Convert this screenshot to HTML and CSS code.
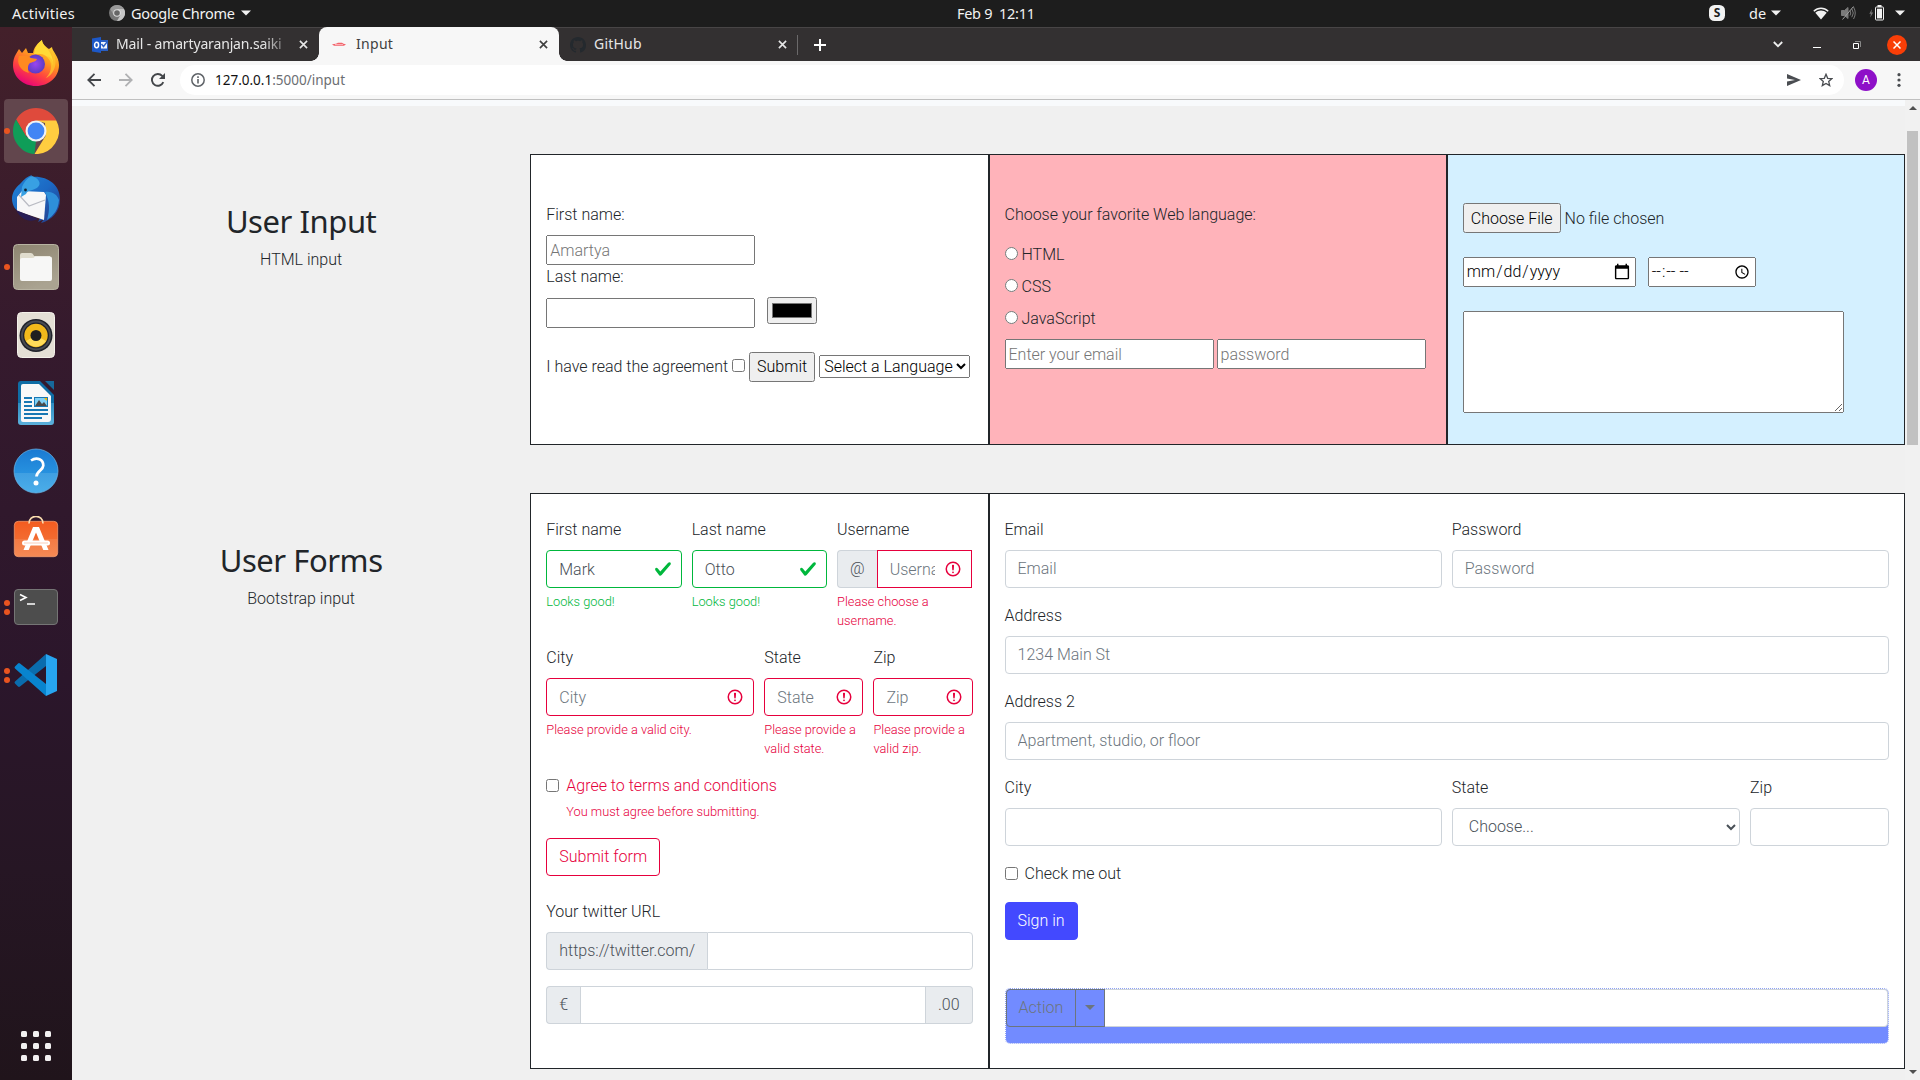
FILE: index.html
```html
<!DOCTYPE html>
<html lang="en">
<head>
<meta charset="utf-8">
<title>Input</title>
<link rel="stylesheet" href="styles.css">
</head>
<body>
<svg class="defs" aria-hidden="true">
  <symbol id="check" viewBox="0 0 8 8"><path fill="#00b73c" d="M2.3 6.73L.6 4.53c-.4-1.04.46-1.4 1.1-.8l1.1 1.4 3.4-3.8c.6-.63 1.6-.27 1.2.7l-4 4.6c-.43.5-.8.4-1.1.1z"/></symbol>
  <symbol id="alert" viewBox="0 0 12 12"><circle cx="6" cy="6" r="4.5" fill="none" stroke="#e6003d"/><path d="M5.8 3.6h.4L6 6.5z" fill="#e6003d" stroke="#e6003d" stroke-linejoin="round"/><circle cx="6" cy="8.2" r=".6" fill="#e6003d"/></symbol>
  <symbol id="cross" viewBox="0 0 10 10"><path d="M1 1l8 8M9 1L1 9" stroke="currentColor" stroke-width="1.8" fill="none"/></symbol>
  <symbol id="caret" viewBox="0 0 10 6"><path d="M0 .5h10L5 5.5z" fill="#f2f2f2"/></symbol>
</svg>

<header class="topbar">
  <div class="top-left">
    <span class="activities">Activities</span>
    <svg class="app-ico" viewBox="0 0 16 16"><circle cx="8" cy="8" r="8" fill="#777"/><path d="M8 4h7a8 8 0 0 1-7 12l3.4-6z" fill="#c4c4c4"/><path d="M1.2 4A8 8 0 0 1 15 4H8L4.6 10z" fill="#9a9a9a"/><circle cx="8" cy="8" r="3.8" fill="#ddd"/><circle cx="8" cy="8" r="2.8" fill="#666"/></svg>
    <span class="app-name">Google Chrome</span>
    <svg class="caret" viewBox="0 0 10 6"><use href="#caret"/></svg>
  </div>
  <div class="clock">Feb 9&nbsp; 12:11</div>
  <div class="top-right">
    <svg width="16" height="16" viewBox="0 0 16 16"><rect width="16" height="16" rx="5.5" fill="#f2f2f2"/><text x="8" y="12.3" text-anchor="middle" class="skype-s">S</text></svg>
    <span class="lang">de</span>
    <svg class="caret lang-caret" viewBox="0 0 10 6"><use href="#caret"/></svg>
    <svg class="wifi" width="16" height="13" viewBox="0 0 16 13"><path d="M.8 4.3C5 .2 11 .2 15.200 4.300" fill="none" stroke="#f2f2f2" stroke-width="1.500"/><path d="M2.300 5.700c3.300-3 8.100-3 11.400 0L8 12.600z" fill="#f2f2f2"/></svg>
    <svg class="mute" width="15" height="14" viewBox="0 0 15 14" fill="none" stroke="#7b7b7b"><path d="M.5 4.500h3L7 1.500v11L3.500 9.500h-3z" fill="#7b7b7b"/><path d="M9 4.500q1.500 2.500 0 5M10.800 2.800q3 4.200 0 8.400M12.500 1q3.500 6 0 12"/><path d="M1.500 13.500L12.500.5" stroke="#a0a0a0"/></svg>
    <svg class="batt" width="15" height="16" viewBox="0 0 15 16"><path d="M3 4L.3 8.700h1.600L1.200 12.500 4.200 7.400H2.400z" fill="#777"/><rect x="6.500" y="2" width="8" height="13" rx=".8" fill="none" stroke="#f2f2f2"/><rect x="8" y="3.700" width="5" height="9.700" fill="#f2f2f2"/><rect x="8.500" y="0" width="4" height="2" fill="#f2f2f2"/></svg>
    <svg class="caret" viewBox="0 0 10 6"><use href="#caret"/></svg>
  </div>
</header>

<div class="desktop">
<nav class="dock">
  <div class="slot"><svg width="46" height="46" viewBox="0 0 46 46">
    <defs><linearGradient id="fx" x1=".8" y1="0" x2=".3" y2="1"><stop offset="0" stop-color="#ffe83a"/><stop offset=".4" stop-color="#ff9a1f"/><stop offset=".7" stop-color="#ff4340"/><stop offset="1" stop-color="#e5007a"/></linearGradient>
    <radialGradient id="fxp"><stop offset="0" stop-color="#9a45f0"/><stop offset="1" stop-color="#5b3cc4"/></radialGradient></defs>
    <path d="M3 14l3-5 3 4 4-5 2 5h5C21 7 25 3 29 0c0 4 4 7 7 9l3-2c0 4 7 9 7 18 0 12-10 21-23 21S0 37 0 25c0-4 1-8 3-11z" fill="url(#fx)"/>
    <path d="M29 0c0 4 4 7 7 11 3 5 5 9 4 15-2-5-6-12-13-12h-6C22 7 25 3 29 0z" fill="#ffda36"/>
    <circle cx="22.500" cy="24" r="9.500" fill="url(#fxp)"/>
    <path d="M6 16c4-1 9-1 12 2l6 1c-1 3-5 3-7 4-3 2-2 8-1 10-8-2-13-9-10-17z" fill="#ff8a20"/>
    <path d="M39 11c7 10 3 23-6 27 7-7 6-16 1-22 3 1 5 3 6 6z" fill="#ffc42d" opacity=".8"/></svg></div>
  <div class="slot active"><i class="dots"><b></b></i><svg width="46" height="46" viewBox="0 0 46 46">
    <path d="M3.100 11.500A23 23 0 0 1 42.900 11.500 L43 13H23L13 28.500z" fill="#df4a3c"/>
    <path d="M3.100 11.500L13.500 29 23 33l-1.500 13A23 23 0 0 1 3.100 11.500z" fill="#0f9d58"/>
    <path d="M43.300 12.500A23 23 0 0 1 21.500 46L32.500 28 32 15l-9-2.500z" fill="#ffcd40"/>
    <circle cx="23" cy="23" r="10.500" fill="#f3f3f3"/><circle cx="23" cy="23" r="8.400" fill="#4285f4"/></svg></div>
  <div class="slot"><svg width="48" height="48" viewBox="0 0 48 48">
    <defs><linearGradient id="tb" x1="0" y1="0" x2="1" y2="1"><stop offset="0" stop-color="#2185d8"/><stop offset=".5" stop-color="#1c69c4"/><stop offset="1" stop-color="#28357f"/></linearGradient></defs>
    <path d="M8 9C12 4 16 1 20 0l-1 2C34 0 48 9 48 24c0 13-8 21-19 24l3-4-6 3 3-6L6 36C2 34 0 28 0 24c0-6 3-11 8-15z" fill="url(#tb)"/>
    <path d="M5 22l5-6 22 1 2 3-2 25L5 36z" fill="#f7f7f8"/><path d="M7 20l10 11 16-6" fill="none" stroke="#b9bbc3" stroke-width="1.200"/>
    <path d="M10 12C13 5 17 2 20 1c6 2 10 7 6 11-4 4-10 2-12 7l-5 3z" fill="#38a0e3"/><circle cx="13.500" cy="15" r="1.400" fill="#123"/>
    <path d="M4 35l22 9c-8 4-17 1-22-9z" fill="#271d56"/><path d="M33 17c8-1 12 3 14 8-1 10-5 15-12 20 3-10 3-18-2-28z" fill="#2e8fd9"/></svg></div>
  <div class="slot"><i class="dots"><b></b></i><svg width="46" height="46" viewBox="0 0 46 46">
    <defs><linearGradient id="fm" x1="0" y1="0" x2=".4" y2="1"><stop offset="0" stop-color="#8d8470"/><stop offset="1" stop-color="#aaa391"/></linearGradient></defs>
    <rect x=".5" y=".5" width="45" height="45" rx="4" fill="url(#fm)" stroke="#b8b3a2"/>
    <path d="M7 11q0-2 2-2h9q2 0 3 3h16v12H7z" fill="#e0dccd"/><path d="M7 16q0-2 2-2h10q2 0 3-1.500h15q2 0 2 2V35q0 2-2 2H9q-2 0-2-2z" fill="#f7f7f6"/></svg></div>
  <div class="slot"><svg width="38" height="46" viewBox="0 0 38 46">
    <rect x=".5" y=".5" width="37" height="45" rx="4" fill="#e4dfd5" stroke="#f4f1ea"/><circle cx="19" cy="23.500" r="16.500" fill="#20222a"/><circle cx="19" cy="23.500" r="14" fill="none" stroke="#484b52" stroke-width="2"/><circle cx="19" cy="23.500" r="11.700" fill="#f1b91b"/><path d="M9 29a11.700 11.700 0 0 0 20 0L19 23.500z" fill="#ffdc5a"/><circle cx="19" cy="23.500" r="5.500" fill="#202020"/></svg></div>
  <div class="slot"><svg width="38" height="46" viewBox="0 0 38 46">
    <defs><linearGradient id="wr" x2="0" y2="1"><stop offset=".5" stop-color="#0f6da5"/><stop offset=".5" stop-color="#2e8dc1"/><stop offset="1" stop-color="#5cb1dc"/></linearGradient></defs>
    <path d="M4 1h19l14 14v27q0 3-3 3H4q-3 0-3-3V4q0-3 3-3z" fill="url(#wr)"/><path d="M28 1h9v9z" fill="#17699c"/><path d="M6 4h16l12 12v23q0 3-3 3H6q-2 0-2-2V6q0-2 2-2z" fill="#f8f8f8"/>
    <path d="M7 18h8M7 22h8M7 26h8M7 30h24M7 34h24M7 38h18" stroke="#1878b4" stroke-width="2"/><rect x="17" y="17" width="14" height="10" fill="#1878b4"/><path d="M18 18h12v8H18z" fill="#7fd0f5"/><path d="M18 26l4-6 3 4 2-2 3 4z" fill="#4a4a4a"/><path d="M27 18h3v3z" fill="#f5b800"/></svg></div>
  <div class="slot"><svg width="46" height="46" viewBox="0 0 46 46">
    <defs><linearGradient id="hp" x2="0" y2="1"><stop offset="0" stop-color="#1a7ad3"/><stop offset=".54" stop-color="#2791df"/><stop offset=".54" stop-color="#3f9fe2"/><stop offset="1" stop-color="#4baee9"/></linearGradient></defs>
    <circle cx="23" cy="23" r="22" fill="url(#hp)" stroke="#6bb7ea" stroke-width=".7"/><path d="M18 12.500c6-4 12.500-1 12.300 5.200C30 22.500 23.500 23 23.500 28.500" fill="none" stroke="#fff" stroke-width="2.700"/><circle cx="23" cy="35" r="2.500" fill="#fff"/></svg></div>
  <div class="slot"><svg width="46" height="46" viewBox="0 0 46 46">
    <defs><linearGradient id="sw" x2="0" y2="1"><stop offset="0" stop-color="#f35c20"/><stop offset=".5" stop-color="#f36b30"/><stop offset=".5" stop-color="#f47a43"/><stop offset="1" stop-color="#f58a55"/></linearGradient></defs>
    <rect x="1.300" y="5.300" width="43.400" height="35.400" rx="4" fill="url(#sw)" stroke="#f9a274" stroke-width=".7"/><path d="M16 7.500C16-2 30-2 30 7.500" fill="none" stroke="#f9dcae" stroke-width="1.700"/><path d="M20 11h6l9.500 23h-5.200L23 16.500 15.700 34h-5.200z" fill="#fff"/><rect x="9" y="24.500" width="28" height="5" rx="2.500" fill="#fff"/><path d="M11 27h24" stroke="#f9cdb9"/></svg></div>
  <div class="slot"><i class="dots"><b></b><b></b></i><svg width="46" height="38" viewBox="0 0 46 38"><rect x="1.500" y="1.500" width="43" height="35" rx="3.500" fill="#4d4d4d" stroke="#757575"/><path d="M7 6.500l6 3-6 3" fill="none" stroke="#fff" stroke-width="1.600"/><path d="M14 16h8" stroke="#fff" stroke-width="1.500"/></svg></div>
  <div class="slot"><i class="dots"><b></b><b></b></i><svg width="44" height="44" viewBox="0 0 44 44"><path d="M32 1v12L6 33.500q-1 .8-2 0L1 30.500q-1-1 0-2z" fill="#0a6cad"/><path d="M32 43V31L6 10.500q-1-.8-2 0L1 13.500q-1 1 0 2z" fill="#0884cf"/><path d="M32 1l11 5v32l-11 5z" fill="#27a5f0"/></svg></div>
  <div class="apps"><i></i><i></i><i></i><i></i><i></i><i></i><i></i><i></i><i></i></div>
</nav>

<section class="browser">
  <div class="tabstrip">
    <div class="tab tab-mail">
      <svg width="16" height="16" viewBox="0 0 16 16"><path d="M8 3h8v11H8z" fill="#2a5fc4"/><path d="M9 5h6v6.500H9z" fill="#f2f6fc"/><path d="M9.500 7l2 2.500L15 5" fill="none" stroke="#2a5fc4" stroke-width="1.400"/><path d="M0 1.500L9 0v16L0 14.500z" fill="#1d58c8"/><ellipse cx="4.600" cy="8" rx="2" ry="2.700" fill="none" stroke="#fff" stroke-width="1.500"/></svg>
      <span class="tab-title fade">Mail - amartyaranjan.saiki</span>
      <svg class="x"><use href="#cross"/></svg>
    </div>
    <div class="tab tab-active">
      <svg width="16" height="16" viewBox="0 0 16 16"><path d="M1 8.300l4-.6 2-1h4l1.500 1 2.500.6L13 9.700H3z" fill="#f2636b"/><path d="M4 8.500h8" stroke="#ffc3c6" stroke-width=".8"/></svg>
      <span class="tab-title title-input">Input</span>
      <svg class="x"><use href="#cross"/></svg>
    </div>
    <div class="tab tab-git">
      <svg width="16" height="16" viewBox="0 0 16 16"><path fill="#24292e" d="M8 0C3.580 0 0 3.580 0 8c0 3.540 2.290 6.530 5.470 7.590.4.070.55-.17.55-.38 0-.19-.01-.82-.01-1.490-2.010.37-2.530-.49-2.690-.94-.09-.23-.48-.94-.82-1.130-.28-.15-.68-.52-.01-.53.63-.01 1.080.58 1.230.82.72 1.210 1.870.87 2.330.66.070-.52.280-.87.510-1.070-1.780-.2-3.640-.89-3.640-3.950 0-.87.310-1.590.820-2.150-.08-.2-.36-1.020.08-2.120 0 0 .67-.21 2.200.82.640-.18 1.320-.27 2-.27s1.360.09 2 .27c1.530-1.040 2.200-.82 2.200-.82.440 1.100.160 1.920.080 2.120.510.560.820 1.270.820 2.150 0 3.070-1.870 3.750-3.650 3.950.290.250.540.730.540 1.480 0 1.070-.01 1.930-.01 2.200 0 .21.150.46.550.38A8.010 8.010 0 0 0 16 8c0-4.420-3.580-8-8-8z"/></svg>
      <span class="tab-title title-git">GitHub</span>
      <svg class="x"><use href="#cross"/></svg>
    </div>
    <svg class="plus" width="12" height="12" viewBox="0 0 12 12"><path d="M6 0v12M0 6h12" stroke="#fff" stroke-width="2"/></svg>
    <div class="win">
      <svg width="10" height="7" viewBox="0 0 10 7"><path d="M.8 1L5 5.200 9.200 1" fill="none" stroke="#eee" stroke-width="1.800"/></svg>
      <svg class="min" width="8" height="7" viewBox="0 0 8 7"><path d="M0 6.500h8" stroke="#fff"/></svg>
      <svg class="restore" width="8" height="8" viewBox="0 0 8 8"><path d="M.5 2.500h5v5h-5z" fill="none" stroke="#fff"/><path d="M2 .5h5.500V6" fill="none" stroke="#888"/></svg>
      <span class="close"><svg width="8" height="8" viewBox="0 0 8 8"><path d="M.5.500l7 7M7.500.500l-7 7" stroke="#fff" stroke-width="1.500"/></svg></span>
    </div>
  </div>

  <div class="toolbar">
    <svg width="14" height="14" viewBox="0 0 14 14"><path d="M14 7H1.500M7.500.800L1.300 7l6.200 6.200" fill="none" stroke="#43464a" stroke-width="1.800"/></svg>
    <svg width="14" height="14" viewBox="0 0 14 14"><path d="M0 7h12.500M6.500.800L12.700 7l-6.200 6.200" fill="none" stroke="#b0b1b3" stroke-width="1.800"/></svg>
    <svg width="14" height="14" viewBox="0 0 14 14"><path d="M12.300 9.200A5.900 5.900 0 1 1 11.200 2.900L13 4.700" fill="none" stroke="#43464a" stroke-width="1.900"/><path d="M14 0v6H8z" fill="#43464a"/></svg>
    <div class="omnibox">
      <svg width="14" height="14" viewBox="0 0 14 14"><circle cx="7" cy="7" r="6.200" fill="none" stroke="#5f6368" stroke-width="1.500"/><path d="M7 6v4.500M7 3.300v1.600" stroke="#5f6368" stroke-width="1.600"/></svg>
      <span class="url"><b>127.0.0.1</b>:5000/input</span>
      <svg class="send" width="14" height="12" viewBox="0 0 14 12"><path d="M0 0l14 6L0 12V7.500L8 6 0 4.500z" fill="#4a4d51"/></svg>
      <svg width="14" height="14" viewBox="0 0 14 14"><path d="M7 1.300l1.700 4 4.200.3-3.200 2.800 1 4.200L7 10.400l-3.700 2.200 1-4.200L1.100 5.600l4.200-.3z" fill="none" stroke="#4a4d51" stroke-width="1.300"/></svg>
    </div>
    <span class="avatar">A</span>
    <svg width="4" height="14" viewBox="0 0 4 14" fill="#4a4d51"><circle cx="2" cy="1.700" r="1.600"/><circle cx="2" cy="7" r="1.600"/><circle cx="2" cy="12.300" r="1.600"/></svg>
  </div>

  <div class="viewport">
    <main class="page">
      <div class="navbar-edge"></div>

      <div class="row row-input">
        <div class="intro"><h2>User Input</h2><p>HTML input</p></div>
        <div class="card">
          <label>First name:</label>
          <input type="text" class="plain" placeholder="Amartya">
          <label class="tight">Last name:</label>
          <div class="line line-color"><input type="text" class="plain"><input type="color"></div>
          <div class="line line-agree"><span>I have read the agreement</span><input type="checkbox"><button type="button">Submit</button><select class="lang-select"><option>Select a Language</option></select></div>
        </div>
        <div class="card pink">
          <p class="question">Choose your favorite Web language:</p>
          <div class="radio"><input type="radio" name="l"><span>HTML</span></div>
          <div class="radio"><input type="radio" name="l"><span>CSS</span></div>
          <div class="radio"><input type="radio" name="l"><span>JavaScript</span></div>
          <div class="line line-login"><input type="text" class="plain" placeholder="Enter your email"><input type="password" class="plain" placeholder="password"></div>
        </div>
        <div class="card sky">
          <input type="file" class="file">
          <div class="line line-date"><input type="date"><input type="time"></div>
          <textarea></textarea>
        </div>
      </div>

      <div class="row row-forms">
        <div class="intro"><h2>User Forms</h2><p>Bootstrap input</p></div>
        <div class="card form">
          <div class="form-row thirds">
            <div><label>First name</label><div class="field"><input class="control valid" value="Mark"><svg class="mark"><use href="#check"/></svg></div><div class="feedback ok">Looks good!</div></div>
            <div><label>Last name</label><div class="field"><input class="control valid" value="Otto"><svg class="mark"><use href="#check"/></svg></div><div class="feedback ok">Looks good!</div></div>
            <div><label>Username</label><div class="group handle"><span class="addon">@</span><div class="field"><input class="control invalid square" placeholder="Username"><svg class="mark"><use href="#alert"/></svg></div></div><div class="feedback bad">Please choose a username.</div></div>
          </div>
          <div class="form-row halves">
            <div><label>City</label><div class="field"><input class="control invalid" placeholder="City"><svg class="mark"><use href="#alert"/></svg></div><div class="feedback bad">Please provide a valid city.</div></div>
            <div><label>State</label><div class="field"><input class="control invalid" placeholder="State"><svg class="mark"><use href="#alert"/></svg></div><div class="feedback bad">Please provide a valid state.</div></div>
            <div><label>Zip</label><div class="field"><input class="control invalid" placeholder="Zip"><svg class="mark"><use href="#alert"/></svg></div><div class="feedback bad">Please provide a valid zip.</div></div>
          </div>
          <div class="agree terms"><input type="checkbox"><div><div class="agree-text">Agree to terms and conditions</div><div class="feedback bad">You must agree before submitting.</div></div></div>
          <button type="button" class="btn btn-outline">Submit form</button>
          <label class="twitter">Your twitter URL</label>
          <div class="group"><span class="addon">https://twitter.com/</span><input class="control last"></div>
          <div class="group money"><span class="addon">€</span><input class="control mid"><span class="addon addon-end">.00</span></div>
        </div>
        <div class="card form wide">
          <div class="form-row pair">
            <div><label>Email</label><input class="control" placeholder="Email"></div>
            <div><label>Password</label><input class="control" placeholder="Password"></div>
          </div>
          <div class="form-row"><div><label>Address</label><input class="control" placeholder="1234 Main St"></div></div>
          <div class="form-row"><div><label>Address 2</label><input class="control" placeholder="Apartment, studio, or floor"></div></div>
          <div class="form-row place">
            <div><label>City</label><input class="control"></div>
            <div><label>State</label><select class="control"><option>Choose...</option></select></div>
            <div><label>Zip</label><input class="control"></div>
          </div>
          <div class="agree"><input type="checkbox"><div>Check me out</div></div>
          <button type="button" class="btn btn-primary">Sign in</button>
          <div class="action-box"><div class="group"><button type="button" class="btn act">Action</button><button type="button" class="btn toggle"><i></i></button><input class="control last"></div></div>
        </div>
      </div>
    </main>
    <div class="scrollbar"><i class="up"></i><div class="thumb"></div><i class="down"></i></div>
  </div>
</section>
</div>
</body>
</html>
```
FILE: styles.css
```css
* { box-sizing: border-box; }
body {
  margin: 0;
  width: 1920px;
  height: 1080px;
  overflow: hidden;
  font: 300 16px/24px Roboto, "Liberation Sans", sans-serif;
  color: #212529;
}
.defs { display: none; }
svg { display: block; flex: none; }
input, button, select, textarea { font: inherit; margin: 0; }

/* system bar */
.topbar {
  height: 27px;
  background: #1d1d1d;
  color: #f2f2f2;
  font: 400 14.5px/26px "Noto Sans", sans-serif;
  display: grid;
  grid-template-columns: 957px 1fr 211px;
}
.top-left, .top-right { display: flex; align-items: center; height: 26px; }
.top-left { padding-left: 12px; }
.activities { width: 97px; letter-spacing: .25px; }
.app-ico { width: 16px; height: 16px; margin-right: 6px; }
.app-name { width: 110px; letter-spacing: -.25px; }
.caret { width: 10px; height: 6px; }
.clock { letter-spacing: -.3px; }
.lang { margin-left: 24px; width: 22px; }
.wifi { margin-left: 32px; }
.mute { margin-left: 12px; }
.batt { margin-left: 13px; margin-right: 11px; }
.skype-s { font: 700 12px "Noto Sans", sans-serif; fill: #1d1d1d; }

.desktop { display: flex; height: 1053px; }

/* launcher */
.dock {
  width: 72px;
  flex: none;
  padding: 2px 4px 0;
  display: flex;
  flex-direction: column;
  align-items: center;
  background: linear-gradient(#43202a, #351a2d 30%, #2b162b 62%, #261624 80%, #20141b);
}
.slot {
  width: 64px;
  height: 64px;
  margin: 2px 0;
  border-radius: 4px;
  display: flex;
  align-items: center;
  justify-content: center;
  position: relative;
  flex: none;
}
.slot.active { background: #62464d; }
.dots {
  position: absolute;
  left: 0;
  top: 0;
  height: 64px;
  display: flex;
  flex-direction: column;
  justify-content: center;
  gap: 3px;
}
.dots b { width: 6px; height: 6px; border-radius: 50%; background: #e95420; }
.apps {
  display: grid;
  grid-template-columns: repeat(3, 6px);
  gap: 6px;
  margin: auto 0 19px;
}
.apps i { width: 6px; height: 6px; border-radius: 1.500px; background: #f2f0f1; }

/* browser chrome */
.browser { flex: 1; display: flex; flex-direction: column; min-width: 0; }
.tabstrip {
  height: 34px;
  background: #333031;
  border-top: 1px solid #484546;
  display: flex;
  align-items: center;
  color: #e6e6e6;
  font: 400 14px/20px "Noto Sans", sans-serif;
}
.tab { height: 33px; display: flex; align-items: center; }
.tab svg:first-child { margin-right: 8px; }
.tab-title { flex: 1; white-space: nowrap; overflow: hidden; margin-top: -1px; }
.x { width: 9px; height: 9px; }
.tab-mail { width: 247px; padding: 0 11px 0 20px; }
.fade {
  -webkit-mask: linear-gradient(90deg, #000 82%, transparent);
  mask: linear-gradient(90deg, #000 82%, transparent);
  letter-spacing: -.15px;
  margin-right: 4px;
}
.title-input { letter-spacing: .3px; margin-left: 1px; }
.title-git { letter-spacing: .2px; }
.tab-active {
  width: 240px;
  height: 34px;
  margin-top: -1px;
  padding: 0 11px 0 12px;
  background: #f7f7f7;
  color: #3f3f3f;
  border-radius: 8px 8px 0 0;
  position: relative;
}
.tab-active::before, .tab-active::after {
  content: "";
  position: absolute;
  bottom: 0;
  width: 8px;
  height: 8px;
}
.tab-active::before { left: -8px; background: radial-gradient(circle at 0 0, transparent 7.500px, #f7f7f7 8px); }
.tab-active::after { right: -8px; background: radial-gradient(circle at 100% 0, transparent 7.500px, #f7f7f7 8px); }
.tab-git { width: 239px; padding: 0 10px 0 11px; height: 20px; border-right: 1px solid #6b696a; }
.plus { margin-left: 16px; }
.win { margin-left: auto; display: flex; align-items: center; padding-right: 13px; }
.min { margin: 6px 0 0 30px; align-self: flex-start; }
.restore { margin: 0 26px 0 32px; }
.close {
  width: 20px;
  height: 20px;
  border-radius: 50%;
  background: #f93e07;
  display: flex;
  align-items: center;
  justify-content: center;
}
.toolbar {
  height: 39px;
  background: #f7f7f7;
  border-bottom: 1px solid #c0c0c0;
  display: flex;
  align-items: center;
  padding-left: 15px;
  gap: 18px;
}
.omnibox {
  width: 1664px;
  height: 30px;
  margin-left: -3px;
  border-radius: 15px;
  background: #fff;
  display: flex;
  align-items: center;
  padding: 0 11px;
}
.url {
  flex: 1;
  margin-left: 10px;
  font: 400 13.500px/20px "Noto Sans", sans-serif;
  color: #6b6e72;
}
.url b { font-weight: 400; color: #111; }
.send { margin-right: 18px; }
.avatar {
  width: 22px;
  height: 22px;
  margin-left: -7px;
  margin-right: 2px;
  border-radius: 50%;
  background: #8e10c8;
  color: #fff;
  font: 400 12px/22px Roboto, sans-serif;
  text-align: center;
}

/* page */
.viewport { flex: 1; display: flex; background: #f0f0f0; min-height: 0; }
.page { width: 1833px; }
.navbar-edge { height: 6px; background: #f8fafc; margin-bottom: 48px; }
.row { display: grid; grid-template-columns: repeat(4, 1fr); }
.row-input { height: 291px; margin-bottom: 48px; }
.row-forms { height: 576px; }
.wide { grid-column: span 2; }
.intro { text-align: center; padding-top: 48px; }
.intro h2 {
  margin: 0 0 8px;
  font: 400 31px/38px "Noto Sans", sans-serif;
  letter-spacing: -.45px;
}
.intro p { margin: 0; }
.card {
  background: #fff;
  border: 1px solid #212529;
  padding: 48px 15px 0;
}
.card.form { padding-top: 24px; }
.pink { background: #ffb3ba; }
.sky { background: #d4f0ff; }
label { display: block; margin-bottom: 8px; }
.line { display: flex; }
.plain { display: block; width: 209px; height: 30px; }
.tight { margin-bottom: 9px; }
.line-color { gap: 12px; }
.line-color input[type=color] { width: 50px; height: 27px; margin-top: -1px; }
.line-agree { margin-top: 24px; align-items: center; gap: 4px; white-space: nowrap; }
.line-agree button { height: 30px; }
.line-agree input { margin-top: -3px; }
.lang-select { width: 151px; height: 23px; margin-top: -2px; }
.question { margin: 0 0 16px; }
.radio { display: flex; align-items: center; gap: 4px; margin-bottom: 8px; height: 24px; }
.radio input { margin-top: -3px; }
.line-login { gap: 3px; }
.file { display: block; height: 30px; }
.file::file-selector-button { font: inherit; height: 30px; }
.line-date { margin: 24px 0; gap: 12px; }
.line-date input { height: 30px; }
.line-date input[type=date] { width: 173px; }
.line-date input[type=time] { width: 108px; }
.line-date input[type=date]::-webkit-calendar-picker-indicator { width: 18px; height: 18px; margin-right: 1px; }
textarea { display: block; width: 381px; height: 102px; }

.form-row { display: grid; column-gap: 10px; margin-bottom: 16px; }
.form-row > div { min-width: 0; }
.thirds { grid-template-columns: repeat(3, 1fr); }
.halves { grid-template-columns: 208px 1fr 1fr; }
.pair { grid-template-columns: 1fr 1fr; }
.place { grid-template-columns: 437.250px 1fr 139px; }
.control {
  display: block;
  width: 100%;
  height: 38px;
  padding: 6px 12px;
  border: 1px solid #ced4da;
  border-radius: 4px;
  background: #fff;
  color: #495057;
}
.control::placeholder { color: #6c757d; }
.wide .control { padding: 5px 12px 7px; }
.field { position: relative; flex: 1; min-width: 0; }
.mark { position: absolute; right: 10px; top: 10px; width: 18px; height: 18px; }
.valid { border-color: #00b73c; padding-right: 36px; }
.invalid { border-color: #e6003d; padding-right: 36px; }
.square { border-radius: 0; }
.handle { margin-right: 1px; }
.feedback { margin-top: 4px; font-size: 12.800px; line-height: 19px; }
.ok { color: #00b73c; }
.bad { color: #e6003d; }
.group { display: flex; }
.addon {
  height: 38px;
  padding: 6px 12px;
  border: 1px solid #ced4da;
  border-right: 0;
  border-radius: 4px 0 0 4px;
  background: #e9ecef;
  color: #495057;
}
.addon-end { border-right: 1px solid #ced4da; border-left: 0; border-radius: 0 4px 4px 0; }
.group .control { flex: 1; min-width: 0; }
.last { border-radius: 0 4px 4px 0; }
.mid { border-radius: 0; }
.agree { display: flex; gap: 7px; margin-bottom: 16px; }
.agree input { margin-top: 5px; width: 13px; height: 13px; }
.terms { margin-bottom: 17px; }
.agree-text { color: #e6003d; }
.btn {
  display: block;
  height: 38px;
  padding: 6px 12px;
  border: 1px solid;
  border-radius: 4px;
}
.btn-outline { color: #e6003d; background: transparent; }
.twitter { margin-top: 24px; }
.money { margin-top: 16px; }
.btn-primary { background: #4349ff; border-color: #4349ff; color: #fff; }
.action-box {
  margin-top: 48px;
  height: 56px;
  border: 1px dotted #8fa2f5;
  border-radius: 5px;
  background: #728bff;
  background-clip: padding-box;
}
.act { background: transparent; border-color: #6c757d; color: #6c757d; border-radius: 4px 0 0 4px; }
.toggle {
  background: transparent;
  border-color: #6c757d;
  border-radius: 0;
  margin-left: -1px;
  padding: 0 9px;
}
.toggle i { display: block; margin-top: -2px; border: 5px solid transparent; border-top-color: #6c757d; border-bottom: 0; }
.action-box .last { border-left: 0; }

.scrollbar {
  width: 15px;
  background: #f1f1f1;
  display: flex;
  flex-direction: column;
  align-items: center;
}
.scrollbar i { border: 4px solid transparent; }
.scrollbar .up { border-top: 0; border-bottom-color: #505050; margin: 6px 0 21px; }
.scrollbar .down { border-bottom: 0; border-top-color: #505050; margin: auto 0 6px; }
.thumb { width: 11px; height: 314px; background: #c1c1c1; }
```
